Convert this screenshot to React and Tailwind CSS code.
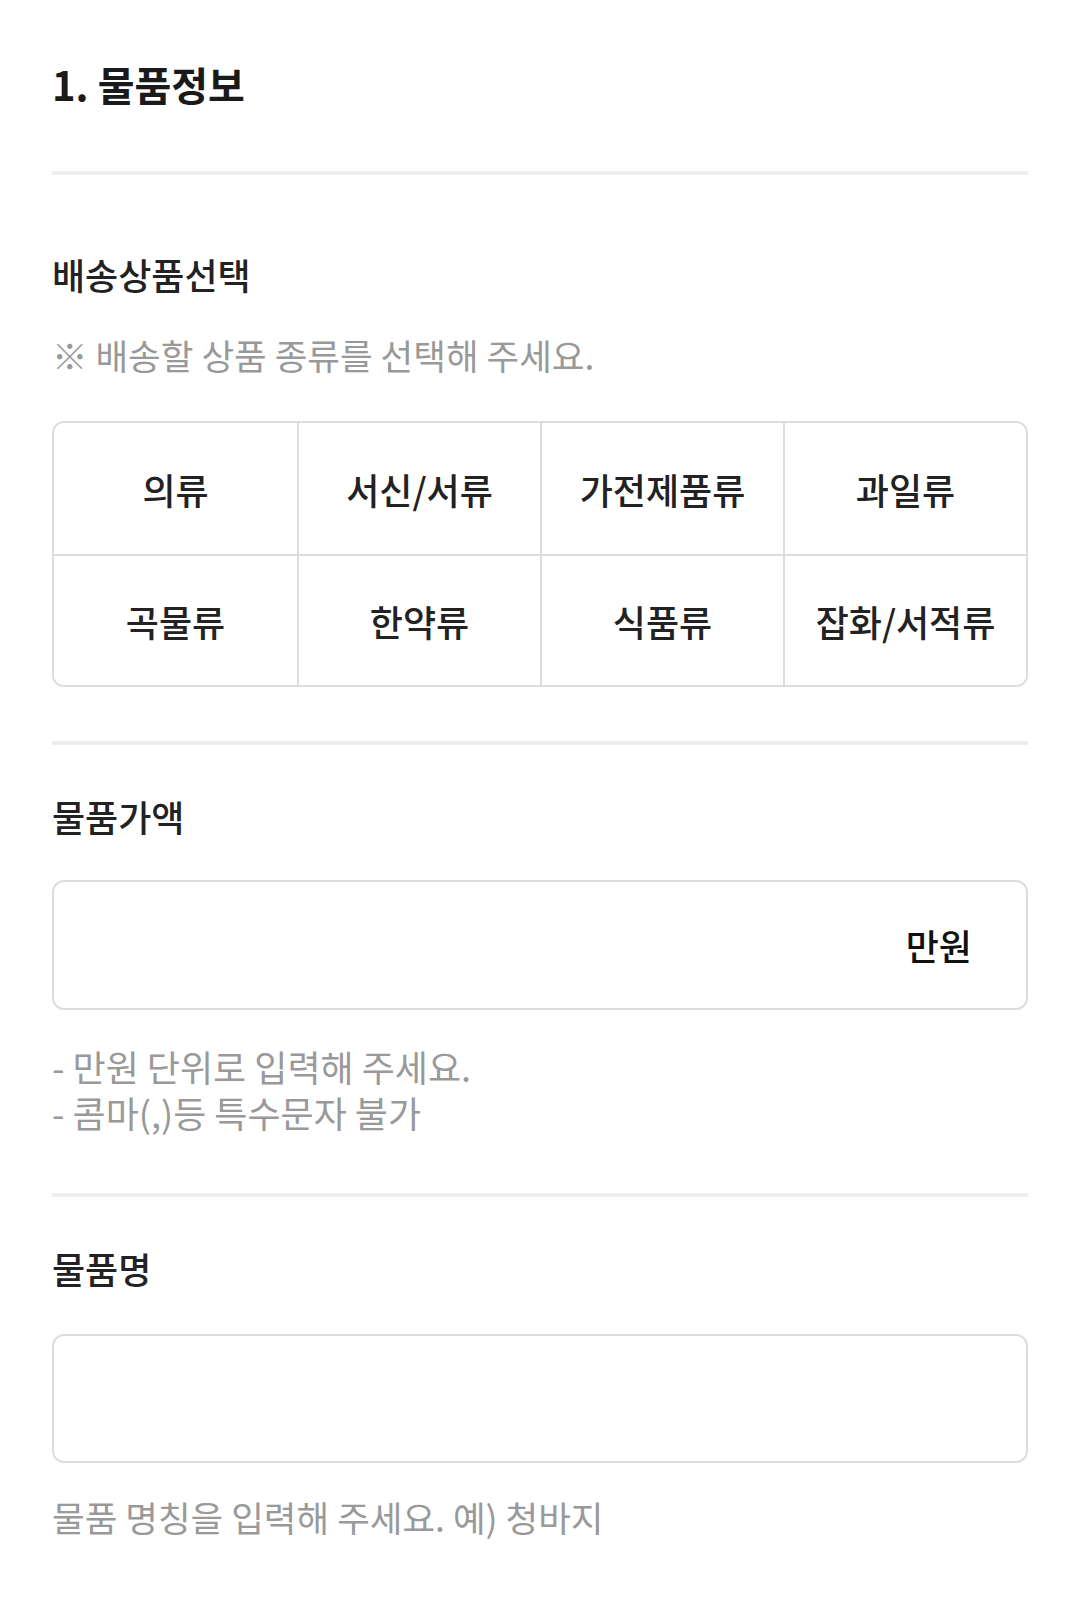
import React from 'react';

const categories = ['의류', '서신/서류', '가전제품류', '과일류', '곡물류', '한약류', '식품류', '잡화/서적류'];

const Divider = ({ className = '' }) => <div className={`h-[4px] bg-[#eeeeee] ${className}`} />;

const Label = ({ children, className = '' }) => (
  <h3 className={`text-[36px] leading-[40px] text-[#222222] font-medium ${className}`}>{children}</h3>
);

const Hint = ({ children, className = '' }) => (
  <p className={`text-[35.5px] leading-[40px] text-[#999999] ${className}`}>{children}</p>
);

export default function App() {
  return (
    <div
      className="min-h-[1619px] bg-white px-[52px] pt-[60px]"
      style={{ fontFamily: '"Noto Sans CJK KR", "Noto Sans", sans-serif' }}
    >
      {/* Title */}
      <h2 className="text-[40px] leading-[48px] font-bold text-[#1a1a1a]">1. 물품정보</h2>

      <Divider className="mt-[63px]" />

      {/* Category select */}
      <Label className="mt-[79px]">배송상품선택</Label>
      <Hint className="mt-[41px]">※ 배송할 상품 종류를 선택해 주세요.</Hint>

      <div className="mt-[46px] grid grid-cols-4 border-2 border-[#dddddd] rounded-[12px] overflow-hidden">
        {categories.map((c, i) => (
          <button
            key={c}
            className={`h-[131px] flex items-center justify-center text-[36px] font-medium text-[#222222] bg-white ${
              i % 4 !== 0 ? 'border-l-2 border-[#dddddd]' : ''
            } ${i >= 4 ? 'border-t-2 border-[#dddddd]' : ''}`}
          >
            {c}
          </button>
        ))}
      </div>

      <Divider className="mt-[54px]" />

      {/* Price */}
      <Label className="mt-[51px]">물품가액</Label>
      <div className="mt-[44px] h-[130px] border-2 border-[#dddddd] rounded-[12px] flex items-center">
        <input className="flex-1 min-w-0 h-full px-[30px] bg-transparent outline-none text-[36px]" />
        <span className="pr-[54px] text-[36px] font-medium text-[#111111]">만원</span>
      </div>
      <div className="mt-[33px] text-[36px] leading-[46px] text-[#999999]">
        <p>- 만원 단위로 입력해 주세요.</p>
        <p>- 콤마(,)등 특수문자 불가</p>
      </div>

      <Divider className="mt-[58px]" />

      {/* Item name */}
      <Label className="mt-[51px]">물품명</Label>
      <div className="mt-[46px] h-[129px] border-2 border-[#dddddd] rounded-[12px]">
        <input className="w-full h-full px-[30px] bg-transparent outline-none text-[36px]" />
      </div>
      <Hint className="mt-[34px]">물품 명칭을 입력해 주세요. 예) 청바지</Hint>
    </div>
  );
}
